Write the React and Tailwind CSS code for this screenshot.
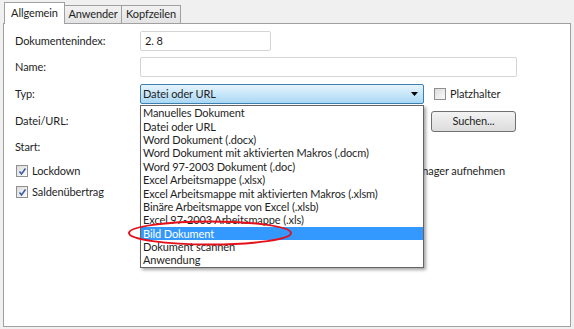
const items = [
  'Manuelles Dokument',
  'Datei oder URL',
  'Word Dokument (.docx)',
  'Word Dokument mit aktivierten Makros (.docm)',
  'Word 97-2003 Dokument (.doc)',
  'Excel Arbeitsmappe (.xlsx)',
  'Excel Arbeitsmappe mit aktivierten Makros (.xlsm)',
  'Binäre Arbeitsmappe von Excel (.xlsb)',
  'Excel 97-2003 Arbeitsmappe (.xls)',
  'Bild Dokument',
  'Dokument scannen',
  'Anwendung',
];

function CheckBox({ checked }) {
  return (
    <span className="flex h-[12px] w-[12px] items-center justify-center border border-[#8f8f8f] bg-gradient-to-br from-[#dcdcdc] to-[#fbfbfb]">
      {checked && (
        <svg width="9" height="9" viewBox="0 0 9 9">
          <path d="M1.5 4.5 L3.5 7 L7.5 1.5" fill="none" stroke="#3a5fa8" strokeWidth="1.6" />
        </svg>
      )}
    </span>
  );
}

function Label({ children }) {
  return <div className="w-[136px] shrink-0 pl-[11px]">{children}</div>;
}

export default function App() {
  return (
    <div
      className="relative h-[329px] w-[574px] overflow-hidden whitespace-nowrap bg-[#f0f0f0] text-[11px] tracking-[-0.1px] text-[#1e1e1e]"
      style={{ fontFamily: 'Lato, "Noto Sans", sans-serif' }}
    >
      {/* tabs */}
      <div className="flex h-[24px] items-end pl-[4px]">
        <div className="relative z-10 flex h-[22px] w-[61px] items-center justify-center border border-b-0 border-[#a0a0a0] bg-white">
          Allgemein
        </div>
        <div className="mb-[1px] flex h-[18px] w-[57px] items-center justify-center border border-b-0 border-l-0 border-[#a0a0a0] bg-gradient-to-b from-[#f2f2f2] to-[#e3e3e3]">
          Anwender
        </div>
        <div className="mb-[1px] flex h-[18px] w-[59px] items-center justify-center border border-b-0 border-l-0 border-[#a0a0a0] bg-gradient-to-b from-[#f2f2f2] to-[#e3e3e3]">
          Kopfzeilen
        </div>
      </div>

      {/* panel */}
      <div className="relative -mt-[1px] ml-[3px] h-[304px] w-[568px] border border-[#a0a0a0] bg-white">
        <div className="flex flex-col pt-[7px]">
          <div className="flex h-[20px] items-center">
            <Label>Dokumentenindex:</Label>
            <div className="flex h-[20px] w-[131px] items-center rounded-[2px] border border-[#d5d5d5] pl-[4px]">2. 8</div>
          </div>
          <div className="mt-[6px] flex h-[20px] items-center">
            <Label>Name:</Label>
            <div className="h-[20px] w-[377px] rounded-[2px] border border-[#d5d5d5]" />
          </div>
          <div className="mt-[7px] flex h-[20px] items-center">
            <Label>Typ:</Label>
            <div className="flex h-[20px] w-[284px] items-center justify-between rounded-[2px] border border-[#3c7fb1] bg-gradient-to-b from-[#e5f4fc] to-[#a9d8f5] pl-[2px] pr-[5px]">
              <span>Datei oder URL</span>
              <svg width="7" height="4" viewBox="0 0 7 4">
                <path d="M0 0 H7 L3.5 4 Z" fill="#000" />
              </svg>
            </div>
            <div className="ml-[10px] flex items-center gap-[4px]">
              <CheckBox />
              <span>Platzhalter</span>
            </div>
          </div>
          <div className="mt-[7px] flex h-[21px] items-center">
            <Label>Datei/URL:</Label>
            <div className="w-[291px]" />
            <button className="flex h-[21px] w-[85px] items-center justify-center rounded-[3px] border border-[#707070] bg-gradient-to-b from-[#f3f3f3] to-[#dcdcdc]">
              Suchen...
            </button>
          </div>
          <div className="mt-[5px] flex h-[20px] items-center">
            <Label>Start:</Label>
          </div>
          <div className="mt-[5px] flex h-[18px] items-center justify-between pl-[12px] pr-[65px]">
            <div className="flex items-center gap-[4px]">
              <CheckBox checked />
              <span>Lockdown</span>
            </div>
            <span>Im Dokumentenmanager aufnehmen</span>
          </div>
          <div className="mt-[3px] flex h-[18px] items-center pl-[12px]">
            <div className="flex items-center gap-[4px]">
              <CheckBox checked />
              <span>Saldenübertrag</span>
            </div>
          </div>
        </div>

        {/* open dropdown list */}
        <div className="absolute left-[136px] top-[81px] z-20 w-[284px] border border-[#646464] bg-white shadow-[2px_2px_3px_rgba(0,0,0,0.35)]">
          {items.map((it, i) => (
            <div
              key={i}
              className={`flex h-[13.4px] items-center pl-[2px] leading-none ${
                i === 9 ? 'bg-[#3399ff] text-white' : ''
              }`}
            >
              {it}
            </div>
          ))}
        </div>

        {/* red annotation */}
        <svg className="absolute left-[122px] top-[195px] z-30" width="170" height="28" viewBox="0 0 170 28">
          <ellipse cx="84" cy="14" rx="81" ry="11.5" fill="none" stroke="#e3101a" strokeWidth="2" />
        </svg>
      </div>
    </div>
  );
}
